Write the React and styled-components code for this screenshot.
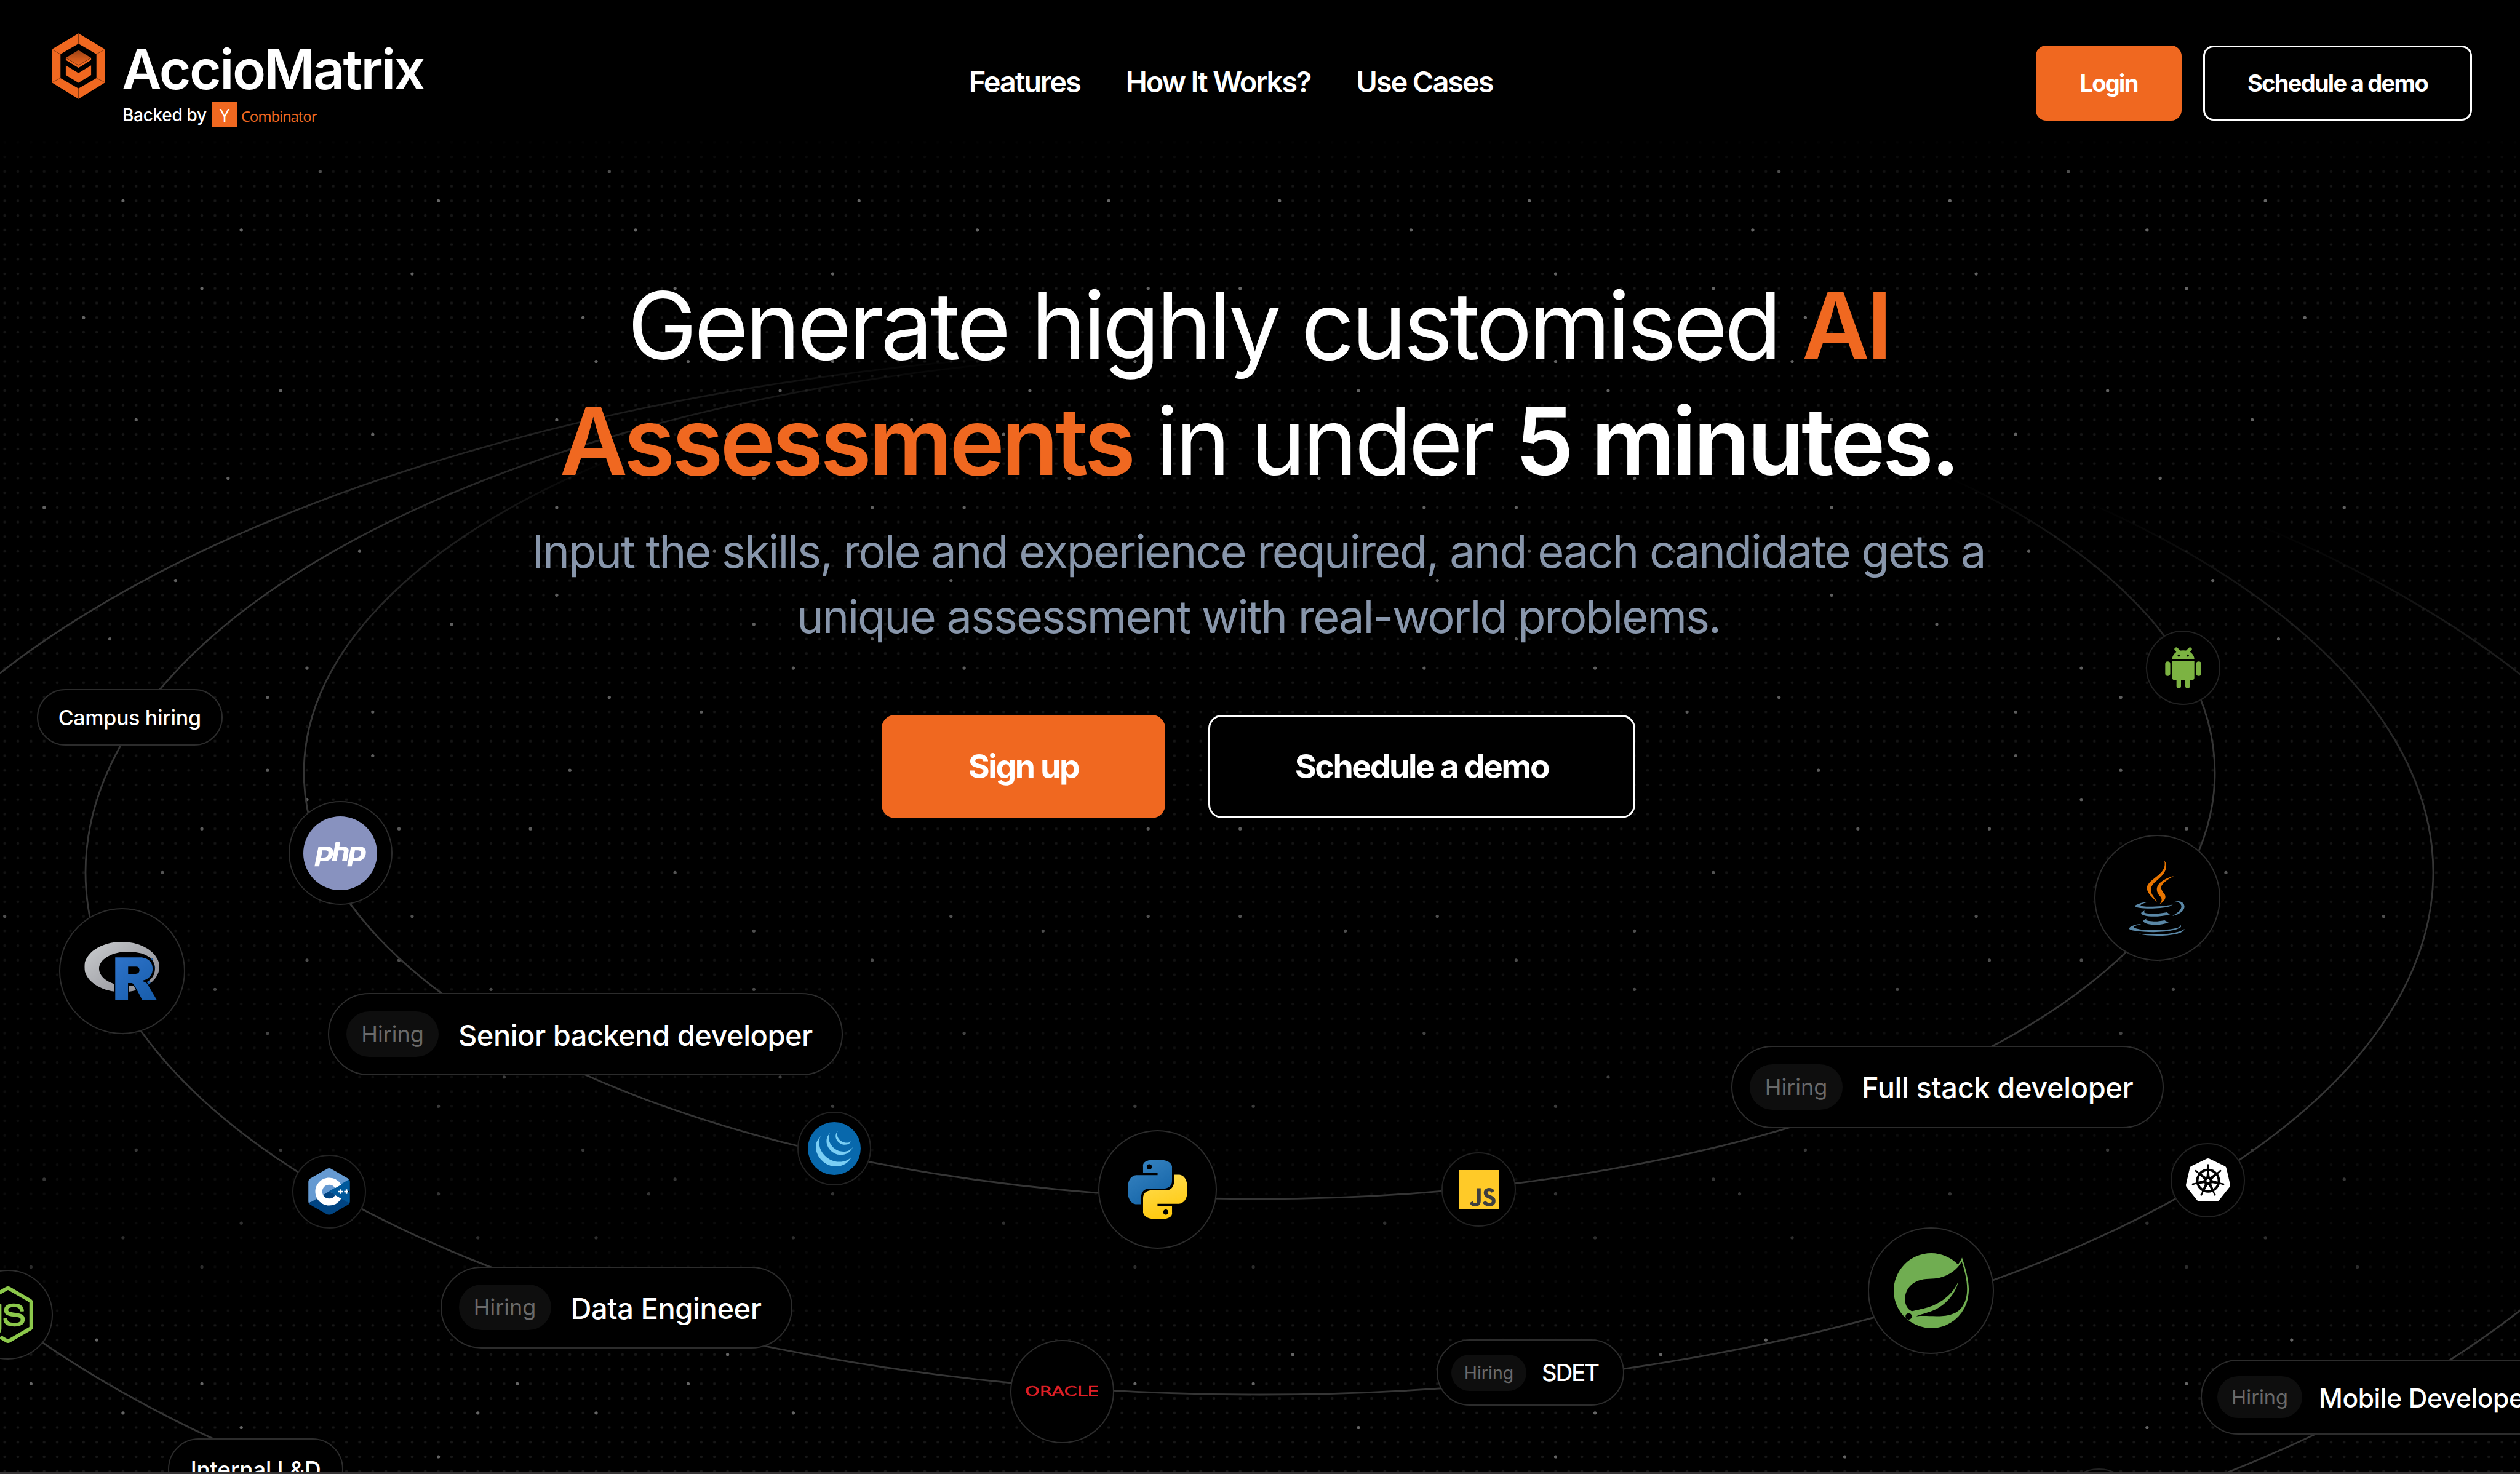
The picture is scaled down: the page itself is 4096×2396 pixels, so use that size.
import React from "react";
import styled, { createGlobalStyle, css } from "styled-components";
import {
  SiSpring,
  SiKubernetes,
  SiJquery,
  SiJavascript,
  SiCplusplus,
  SiNodedotjs,
  SiR,
} from "react-icons/si";
import { DiPhp } from "react-icons/di";

const ORANGE = "#f06820";
const LINE = "#2c2c2c";

const GlobalStyle = createGlobalStyle`
  * { box-sizing: border-box; }
  body { margin: 0; background: #000; }
`;

const Page = styled.div`
  position: relative;
  width: 4096px;
  height: 2396px;
  overflow: hidden;
  background: #000;
  color: #fff;
  font-family: Inter, "Liberation Sans", sans-serif;
`;

const Backdrop = styled.svg`
  position: absolute;
  inset: 0;
  width: 100%;
  height: 100%;
`;

/* ---------- header ---------- */

const Header = styled.header`
  position: relative;
  display: flex;
  align-items: center;
  justify-content: space-between;
  height: 269px;
  padding: 0 78px 0 84px;
`;

const Logo = styled.a`
  display: flex;
  align-self: flex-start;
  gap: 27px;
  width: 608px;
  padding-top: 54px;
`;

const LogoMark = styled.svg`
  flex: none;
  width: 87px;
  height: 107px;
`;

const LogoText = styled.div`
  padding-top: 14px;
`;

const Wordmark = styled.div`
  font-size: 89px;
  line-height: 90px;
  font-weight: 600;
  letter-spacing: -2.6px;
`;

const BackedRow = styled.div`
  display: flex;
  align-items: center;
  height: 41px;
  margin-top: 8px;
  padding-left: 1px;
  white-space: nowrap;
  font-size: 28px;
  font-weight: 500;
  letter-spacing: -0.3px;
`;

const YBox = styled.span`
  display: grid;
  place-items: center;
  width: 40px;
  height: 41px;
  margin: 0 7px 0 9px;
  background: ${ORANGE};
  font: 400 29px/41px "Open Sans", "Noto Sans", sans-serif;
`;

const Combinator = styled.span`
  padding-top: 4px;
  color: ${ORANGE};
  font: 400 24px/36px "Noto Sans", "Open Sans", sans-serif;
  letter-spacing: -1.2px;
`;

const Nav = styled.nav`
  display: flex;
  gap: 74px;
  margin-top: -4px;
  font-size: 47px;
  line-height: 60px;
  font-weight: 600;
  letter-spacing: -0.045em;
`;

const NavLink = styled.a`
  color: #fff;
`;

const Actions = styled.div`
  display: flex;
  gap: 35px;
`;

const Button = styled.button`
  width: ${(p) => p.$width}px;
  height: 122px;
  padding: 0;
  border: 3px solid ${(p) => (p.$primary ? ORANGE : "#fff")};
  border-radius: 17px;
  background: ${(p) => (p.$primary ? ORANGE : "#000")};
  color: #fff;
  font: 700 38px/1 Inter, "Liberation Sans", sans-serif;
  letter-spacing: -0.045em;
  ${(p) =>
    p.$large &&
    css`
      height: 168px;
      border-radius: 22px;
      font-size: 53.5px;
    `}
`;

/* ---------- hero ---------- */

const Hero = styled.main`
  position: relative;
  display: flex;
  flex-direction: column;
  align-items: center;
  padding: 166px 5px 0 0;
  text-align: center;
`;

const Title = styled.h1`
  margin: 0;
  font-size: 151.6px;
  line-height: 188px;
  font-weight: 400;
  letter-spacing: -0.033em;
`;

const Strong = styled.b`
  font-weight: 600;
  color: ${(p) => (p.$accent ? ORANGE : "inherit")};
`;

const Subtitle = styled.p`
  margin: 33px 0 106.500px;
  color: #8896ab;
  font-size: 74px;
  line-height: 105.6px;
  font-weight: 400;
  letter-spacing: -0.0285em;
`;

const HeroActions = styled.div`
  display: flex;
  gap: 70px;
`;

/* ---------- orbit diagram ---------- */

const Canvas = styled.div`
  position: absolute;
  inset: 0;
`;

const Node = styled.div`
  position: absolute;
  left: ${(p) => p.$x - p.$r}px;
  top: ${(p) => p.$y - p.$r}px;
  width: ${(p) => p.$r * 2}px;
  height: ${(p) => p.$r * 2}px;
  display: grid;
  place-items: center;
  border: 2px solid ${(p) => (p.$r < 70 ? "#222" : LINE)};
  border-radius: 50%;
  background: #000;
`;

const Pill = styled.div`
  position: absolute;
  left: ${(p) => p.$x}px;
  top: ${(p) => p.$y}px;
  display: flex;
  align-items: center;
  height: ${(p) => p.$h}px;
  width: ${(p) => p.$w}px;
  border: 2px solid ${LINE};
  border-radius: ${(p) => p.$h / 2}px;
  background: #000;
  white-space: nowrap;
`;

const Badge = styled.span`
  flex: none;
  display: grid;
  place-items: center;
  width: ${(p) => p.$w}px;
  height: ${(p) => p.$h}px;
  margin-left: ${(p) => p.$inset}px;
  border-radius: ${(p) => p.$h / 2}px;
  background: #0e0e0e;
  color: #6a6a6a;
  font-size: ${(p) => p.$size}px;
`;

const PillTitle = styled.span`
  margin-left: ${(p) => p.$gap}px;
  padding-top: ${(p) => p.$drop || 0}px;
  font-size: ${(p) => p.$size}px;
  font-weight: 500;
  letter-spacing: ${(p) => p.$spacing}px;
`;

const CenterLabel = styled.span`
  margin: 0 auto;
  font-size: ${(p) => p.$size}px;
  font-weight: 500;
  letter-spacing: -0.3px;
`;

const BottomBar = styled.div`
  position: absolute;
  left: 0;
  right: 0;
  bottom: 0;
  height: 3px;
  background: #373536;
`;

/* ---------- logos in the nodes ---------- */

const Disc = styled.div`
  display: grid;
  place-items: center;
  width: ${(p) => p.$size}px;
  height: ${(p) => p.$size}px;
  border-radius: 50%;
  background: ${(p) => p.$color};
`;

const Tile = styled.div`
  display: grid;
  place-items: center;
  width: 63px;
  height: 64px;
  background: #3f3f3f;
`;

const Stack = styled.div`
  display: grid;
  > * {
    grid-area: 1 / 1;
  }
`;

const Layer = styled.div`
  display: grid;
  color: ${(p) => p.$color};
  background: ${(p) => p.$back || "none"};
  clip-path: ${(p) => p.$clip};
  svg {
    fill: ${(p) => p.$fill || "currentColor"};
  }
`;

const OracleText = styled.span`
  color: #e01f26;
  font: 400 21.2px/1 "DejaVu Sans", sans-serif;
  -webkit-text-stroke: 0.6px #e01f26;
  transform: scaleX(1.42);
`;

const Art = styled.svg`
  width: ${(p) => p.$w}px;
  height: ${(p) => p.$h}px;
`;

const CppLogo = () => (
  <Stack>
    <Layer
      $back="#fff"
      $clip="polygon(50% 4%, 90% 28%, 90% 72%, 50% 96%, 10% 72%, 10% 28%)"
    />
    <Layer $color="#659ad2" $clip="polygon(0 0, 100% 0, 100% 21%, 50% 50%, 0 79%)">
      <SiCplusplus size={76} />
    </Layer>
    <Layer $color="#00599c" $clip="polygon(100% 20%, 100% 80%, 49.5% 50%)">
      <SiCplusplus size={76} />
    </Layer>
    <Layer $color="#004482" $clip="polygon(0 79%, 50% 50%, 100% 79%, 100% 100%, 0 100%)">
      <SiCplusplus size={76} />
    </Layer>
  </Stack>
);

const letterClip =
  "40.5% 31%, 80% 31%, 90% 33%, 94% 45%, 92% 55%, 86% 62.5%, 88% 66%, 98% 91%, 76% 91%, 66% 71%, 58.5% 66%, 58.5% 91%, 40.5% 91%";

const RLogo = () => (
  <Stack>
    <svg width="0" height="0">
      <defs>
        <linearGradient id="ringGrey" x1="0" y1="0" x2="1" y2="1">
          <stop offset="0" stopColor="#cbced0" />
          <stop offset="1" stopColor="#84838b" />
        </linearGradient>
        <linearGradient id="letterBlue" x1="0" y1="0" x2="1" y2="1">
          <stop offset="0.3" stopColor="#2f74cb" />
          <stop offset="1" stopColor="#165caa" />
        </linearGradient>
      </defs>
    </svg>
    <Layer
      $fill="url(#ringGrey)"
      $clip={`polygon(evenodd, 0 0, 100% 0, 100% 100%, 0 100%, 0 0, ${letterClip}, 40.5% 31%, 0 0)`}
    >
      <SiR size={122} />
    </Layer>
    <Layer $fill="url(#letterBlue)" $clip={`polygon(${letterClip})`}>
      <SiR size={122} />
    </Layer>
  </Stack>
);

const PythonLogo = () => (
  <Art $w={97} $h={97} viewBox="0 0 24 24">
    <defs>
      <linearGradient id="pyBlue" x1="0" y1="0" x2="0.6" y2="1">
        <stop offset="0" stopColor="#3b87c4" />
        <stop offset="1" stopColor="#1565a8" />
      </linearGradient>
      <linearGradient id="pyYellow" x1="0.3" y1="0" x2="0.6" y2="1">
        <stop offset="0" stopColor="#ffdc50" />
        <stop offset="1" stopColor="#ffc80a" />
      </linearGradient>
    </defs>
    <path
      fill="url(#pyBlue)"
      d="M14.25.18l.9.2.73.26.59.3.45.32.34.34.25.34.16.33.1.3.04.26.02.2-.01.13V8.5l-.05.63-.13.55-.21.46-.26.38-.3.31-.33.25-.35.19-.35.14-.33.1-.3.07-.26.04-.21.02H8.77l-.69.05-.59.14-.5.22-.41.27-.33.32-.27.35-.2.36-.15.37-.1.35-.07.32-.04.27-.02.21v3.06H3.17l-.21-.03-.28-.07-.32-.12-.35-.18-.36-.26-.36-.36-.35-.46-.32-.59-.28-.73-.21-.88-.14-1.05-.05-1.23.06-1.22.16-1.04.24-.87.32-.71.36-.57.4-.44.42-.33.42-.24.4-.16.36-.1.32-.05.24-.01h.16l.06.01h8.16v-.83H6.18l-.01-2.75-.02-.37.05-.34.11-.31.17-.28.25-.26.31-.23.38-.2.44-.18.51-.15.58-.12.64-.1.71-.06.77-.04.84-.02 1.27.05zm-6.3 1.98l-.23.33-.08.41.08.41.23.34.33.22.41.09.41-.09.33-.22.23-.34.08-.41-.08-.41-.23-.33-.33-.22-.41-.09-.41.09z"
    />
    <path
      fill="url(#pyYellow)"
      d="M21.04 6.11l.28.06.32.12.35.18.36.27.36.35.35.47.32.59.28.73.21.88.14 1.04.05 1.23-.06 1.23-.16 1.04-.24.86-.32.71-.36.57-.4.45-.42.33-.42.24-.4.16-.36.09-.32.05-.24.02-.16-.01h-8.22v.82h5.84l.01 2.76.02.36-.05.34-.11.31-.17.29-.25.25-.31.24-.38.2-.44.17-.51.15-.58.13-.64.09-.71.07-.77.04-.84.01-1.27-.04-1.07-.14-.9-.2-.73-.25-.59-.3-.45-.33-.34-.34-.25-.34-.16-.33-.1-.3-.04-.25-.02-.2.01-.13v-5.34l.05-.64.13-.54.21-.46.26-.38.3-.32.33-.24.35-.2.35-.14.33-.1.3-.06.26-.04.21-.02.13-.01h5.84l.69-.05.59-.14.5-.21.41-.28.33-.32.27-.35.2-.36.15-.36.1-.35.07-.32.04-.28.02-.21V6.07h2.09l.14.01zm-6.47 14.25l-.23.33-.08.41.08.41.23.33.33.23.41.08.41-.08.33-.23.23-.33.08-.41-.08-.41-.23-.33-.33-.23-.41-.08-.41.08z"
    />
  </Art>
);

const JavaLogo = () => (
  <Art $w={92} $h={122} viewBox="5 0 376 512">
    <g fill="#e87500">
      <path d="M192.34 280.8c-19-42.7-83.1-80.2 0-145.8C296 53.2 242.84 0 242.84 0c21.5 84.5-75.6 110.1-110.7 162.6-23.9 35.9 11.7 74.4 60.2 118.2z" />
      <path d="M306.94 104.6c.1 0-175.2 43.8-91.5 140.2 24.7 28.4-6.5 54-6.5 54s62.7-32.4 33.9-72.9c-26.9-37.8-47.5-56.6 64.1-121.3z" />
    </g>
    <path
      fill="#5a87a6"
      d="M277.74 312.9c9.8-6.7 23.4-12.5 23.4-12.5s-38.7 7-77.2 10.2c-47.1 3.9-97.7 4.7-123.1 1.3-60.1-8 33-30.1 33-30.1s-36.1-2.4-80.6 19c-52.5 25.4 130 37 224.5 12.1zM300.84 375.1a12.19 12.19 0 0 1-2 2.6c128.3-33.7 81.1-118.9 19.8-97.3a17.33 17.33 0 0 0-8.2 6.3 70.45 70.45 0 0 1 11-3c31-6.5 75.5 41.5-20.6 91.4zM348 437.4s14.5 11.9-15.9 21.2c-57.9 17.5-240.8 22.8-291.6.7-18.3-7.9 16-19 26.8-21.3 11.2-2.4 17.7-2 17.7-2-20.3-14.3-131.3 28.1-56.4 40.2C232.84 509.4 401 461.3 348 437.4zM124.44 396c-78.7 22 47.9 67.4 148.1 24.5a185.89 185.89 0 0 1-28.2-13.8c-44.7 8.5-65.4 9.1-106 4.5-33.5-3.8-13.9-15.2-13.9-15.2zm179.8 97.2c-78.7 14.8-175.8 13.1-233.3 3.6 0-.1 11.8 9.7 72.4 13.6 92.2 5.9 233.8-3.3 237.1-46.9 0 0-6.4 16.5-76.2 29.7zM260.64 353c-59.2 11.4-93.5 11.1-136.8 6.6-33.5-3.5-11.6-19.7-11.6-19.7-86.8 28.8 48.2 61.4 169.5 25.9a60.37 60.37 0 0 1-21.1-12.8z"
    />
  </Art>
);

const AndroidLogo = () => (
  <Art $w={59} $h={67} viewBox="0 0 88.5 100.5" fill="#7cb342">
    <path d="M27.500 5 35 13M61 5 53.500 13" stroke="#7cb342" strokeWidth="9" strokeLinecap="round" />
    <path d="M17.500 29.500C17.500 20 24 13 33 9Q44.500 6.500 56 9C65 13 71.500 20 71.500 29.500Z" />
    <path d="M17.500 34.500h54v40a5 5 0 0 1-5 5H60.500V95a5.500 5.500 0 0 1-11 0V79.500H39V95a5.500 5.500 0 0 1-11 0V79.500H22.500a5 5 0 0 1-5-5Z" />
    <rect x="0.5" y="35" width="12.300" height="35" rx="6" />
    <rect x="76" y="35" width="12.300" height="35" rx="6" />
    <circle cx="33.500" cy="20.500" r="2.700" fill="#000" />
    <circle cx="55.600" cy="20.500" r="2.700" fill="#000" />
  </Art>
);

const BrandMark = () => (
  <LogoMark viewBox="0 0 131 160">
    <defs>
      <linearGradient id="gem" x1="0" y1="0" x2="0" y2="1">
        <stop offset="0" stopColor="#9c4215" />
        <stop offset="1" stopColor={ORANGE} />
      </linearGradient>
    </defs>
    <path
      fill={ORANGE}
      fillRule="evenodd"
      d="M65.500 0 131 39V120L65.500 160 0 120V39ZM65.500 25 21.500 50.700V109.300L65.500 134.500 109.500 109.300V50.700Z"
    />
    <path
      stroke="#5a2508"
      strokeWidth="1"
      d="M65.500 0V25M131 39 109.500 50.700M131 120 109.500 109.300M65.500 160V134.500M0 120 21.500 109.300M0 39 21.500 50.700"
    />
    <path fill={ORANGE} d="M34.500 60 65.500 77.500 96.500 60V65L65.500 84 34.500 65Z" />
    <path fill="url(#gem)" d="M65.500 40.700 96.500 59.700 65.500 77.500 34.500 59.700Z" />
    <path fill="none" stroke="#7c3510" strokeWidth="1" d="M34.500 60 65.500 78 96.500 60" />
    <path fill={ORANGE} d="M34.500 78.300 65.500 97 96.500 78.300V102L65.500 120.700 34.500 102Z" />
  </LogoMark>
);

/* ---------- backdrop: dot grid, stars and orbits ---------- */

const COL = 21.363;
const ROW = 23.74;
const X0 = 434.9 - 20 * COL;
const Y0 = 468.8 - 8 * ROW;
const UNIT = 0.66494;
const CENTER = 2919;

/* star positions by row, for the left half; the right half is its mirror */
const starRows = [
  [420, 780, 1480], [490, 300, 1070], [556, 600, 1550], [490, 2110, 2700], [560, 2400],
  [669, 2031, 1000], [705, 1648, 2803, 480], [777, 1422, 2416, 200], [885, 1454, 1679, 2031, 2771],
  [957, 1902, 2513, 690], [1026, 1358, 2224, 330], [1063, 1776, 2450, 910], [1100, 2936],
  [1171, 1840, 2610, 560], [1243, 1358, 2127, 2352, 110], [1348, 1744, 2095, 2706, 880],
  [1420, 2320, 430], [1456, 1358], [1529, 1840, 1100], [1565, 2127, 270],
  [1634, 1934, 2352, 750], [1706, 654, 1480], [1742, 910, 1712], [1847, 910, 2610],
  [1883, 654, 1390], [1955, 750], [2023, 495, 976, 1300, 2800], [2132, 399, 1640],
  [2240, 13, 1007, 2340, 2800], [2280, 1840, 2540], [2349, 750, 976, 2130], [2421, 527, 1200, 1841],
  [2526, 654, 2352], [2631, 1230, 1903], [2706, 1072, 2032, 2770], [2812, 335, 686, 1423],
  [2884, 110, 1648], [2920, 1072, 2032, 1600], [2992, 590, 2450], [3030, 301, 1168, 1454, 1934],
  [3097, 77, 495, 2770],
];
const lowerStarRows = [
  [3286, 238, 4317, 5600], [3322, 1777, 3163, 4061], [3394, 77, 495, 1263, 1680, 2772, 3066, 5342],
  [3465, 301, 1168, 1454, 1934, 3903], [3500, 589, 2514, 3324, 5248], [3572, 1072, 3806, 4500],
];

const snapX = (x) => X0 + Math.round((x * UNIT - X0) / COL) * COL;
const snapY = (y) => Y0 + Math.round((y * UNIT - Y0) / ROW) * ROW;

const stars = [
  ...starRows.flatMap(([y, ...xs]) =>
    xs.flatMap((x) => [
      [snapX(x), snapY(y)],
      [snapX(2 * CENTER - x), snapY(y)],
    ])
  ),
  ...lowerStarRows.flatMap(([y, ...xs]) => xs.map((x) => [snapX(x), snapY(y)])),
];

const orbits = [
  { id: "inner", cy: 1256, rx: 1553, ry: 693, from: [1000, 740], to: [993, 1140] },
  { id: "middle", cy: 1418, rx: 1908, ry: 849, from: [1700, 590], to: [1638, 1060] },
  { id: "outer", cy: 1613, rx: 2355, ry: 1049, from: [1700, 590], to: [1638, 1060] },
];

const Scene = () => (
  <Backdrop viewBox="0 0 4096 2396">
    <defs>
      <pattern id="dots" x={X0 - COL / 2} y={Y0 - ROW / 2} width={COL} height={ROW} patternUnits="userSpaceOnUse">
        <circle cx={COL / 2} cy={ROW / 2} r="2.300" fill="#fff" />
      </pattern>
      <linearGradient id="fade" gradientUnits="userSpaceOnUse" x1="0" y1="220" x2="0" y2="2396">
        <stop offset="0" stopColor="#fff" stopOpacity="0" />
        <stop offset="0.035" stopColor="#fff" stopOpacity="1" />
        <stop offset="0.5" stopColor="#fff" stopOpacity="0.9" />
        <stop offset="0.870" stopColor="#fff" stopOpacity="0.4" />
        <stop offset="0.885" stopColor="#fff" stopOpacity="1" />
        <stop offset="1" stopColor="#fff" stopOpacity="1" />
      </linearGradient>
      <mask id="veil" maskUnits="userSpaceOnUse" x="0" y="0" width="4096" height="2396">
        <rect width="4096" height="2396" fill="url(#fade)" />
      </mask>
      {orbits.map((o) => (
        <linearGradient
          key={o.id}
          id={o.id}
          gradientUnits="userSpaceOnUse"
          x1={o.from[0]}
          y1={o.from[1]}
          x2={o.to[0]}
          y2={o.to[1]}
        >
          <stop offset="0" stopColor="#353535" stopOpacity="0" />
          <stop offset="0.25" stopColor="#353535" stopOpacity="0.45" />
          <stop offset="1" stopColor="#353535" stopOpacity="1" />
        </linearGradient>
      ))}
    </defs>
    <g mask="url(#veil)">
      <rect y="220" width="4096" height="2176" fill="url(#dots)" opacity="0.09" />
      {stars.map(([x, y], i) => (
        <circle key={i} cx={x} cy={y} r="2.600" fill="#666" />
      ))}
    </g>
    {orbits.map((o) => (
      <ellipse
        key={o.id}
        cx="2047"
        cy={o.cy}
        rx={o.rx}
        ry={o.ry}
        fill="none"
        stroke={`url(#${o.id})`}
        strokeWidth="2.800"
      />
    ))}
  </Backdrop>
);

const logoNodes = [
  { x: 553.4, y: 1386.7, r: 84.3, art: <Disc $size={120} $color="#8892bf"><DiPhp size={118} /></Disc> },
  { x: 198.5, y: 1578.2, r: 102.7, art: <RLogo /> },
  { x: 535, y: 1936.6, r: 60, art: <CppLogo /> },
  { x: 1355.7, y: 1867, r: 60, art: <Disc $size={86} $color="#0868ac"><SiJquery size={60} color="#7acef4" /></Disc> },
  { x: 1881, y: 1933.5, r: 96.5, art: <PythonLogo /> },
  { x: 2403.6, y: 1933.6, r: 60.5, art: <Tile><SiJavascript size={64} color="#ffca28" /></Tile> },
  { x: 3548.8, y: 1085.6, r: 60.5, art: <AndroidLogo /> },
  { x: 3506.3, y: 1459.6, r: 102.7, art: <JavaLogo /> },
  { x: 3588.7, y: 1918, r: 60.5, art: <SiKubernetes size={72} color="#fff" /> },
  { x: 3138.6, y: 2098, r: 102.7, art: <SiSpring size={122} color="#70ad51" /> },
  { x: 1726.7, y: 2262, r: 84.3, art: <OracleText>ORACLE</OracleText> },
  { x: 13, y: 2137.3, r: 73, art: <SiNodedotjs size={92} color="#8cc84b" /> },
  { x: 3411, y: 2447, r: 60.5, art: null },
];

const hiringPills = [
  { text: "Senior backend developer", x: 533, y: 1614, w: 837, h: 134, bw: 150, bh: 74, bs: 36, inset: 28, gap: 32, size: 47, spacing: -0.5, drop: 2 },
  { text: "Full stack developer", x: 2814, y: 1699.5, w: 703, h: 134, bw: 151, bh: 74, bs: 36, inset: 28, gap: 31, size: 47, spacing: -0.4, drop: 2 },
  { text: "Data Engineer", x: 715.5, y: 2058.5, w: 572, h: 133, bw: 150, bh: 74, bs: 36, inset: 28, gap: 32, size: 47, spacing: -0.4, drop: 2 },
  { text: "SDET", x: 2335, y: 2177, w: 304.5, h: 108, bw: 122, bh: 59, bs: 28.5, inset: 22, gap: 25, size: 38, spacing: -1.9, drop: 0 },
  { text: "Mobile Developer", x: 3577, y: 2210, w: 640, h: 122, bw: 138, bh: 68, bs: 32.5, inset: 25, gap: 27, size: 42.5, spacing: -0.4, drop: 2 },
];

export default function App() {
  return (
    <Page>
      <GlobalStyle />
      <Scene />
      <Canvas>
        {logoNodes.map((n, i) => (
          <Node key={i} $x={n.x} $y={n.y} $r={n.r}>
            {n.art}
          </Node>
        ))}
        {hiringPills.map((p) => (
          <Pill key={p.text} $x={p.x} $y={p.y} $w={p.w} $h={p.h}>
            <Badge $w={p.bw} $h={p.bh} $size={p.bs} $inset={p.inset}>
              Hiring
            </Badge>
            <PillTitle $gap={p.gap} $size={p.size} $spacing={p.spacing} $drop={p.drop}>
              {p.text}
            </PillTitle>
          </Pill>
        ))}
        <Pill $x={59.7} $y={1120} $w={302} $h={92}>
          <CenterLabel $size={34}>Campus hiring</CenterLabel>
        </Pill>
        <Pill $x={273} $y={2338} $w={285} $h={100}>
          <CenterLabel $size={37}>Internal L&amp;D</CenterLabel>
        </Pill>
      </Canvas>

      <Header>
        <Logo>
          <BrandMark />
          <LogoText>
            <Wordmark>AccioMatrix</Wordmark>
            <BackedRow>
              Backed by
              <YBox>Y</YBox>
              <Combinator>Combinator</Combinator>
            </BackedRow>
          </LogoText>
        </Logo>
        <Nav>
          <NavLink>Features</NavLink>
          <NavLink>How It Works?</NavLink>
          <NavLink>Use Cases</NavLink>
        </Nav>
        <Actions>
          <Button $primary $width={237}>Login</Button>
          <Button $width={437}>Schedule a demo</Button>
        </Actions>
      </Header>

      <Hero>
        <Title>
          Generate highly customised <Strong $accent>AI</Strong>
          <br />
          <Strong $accent>Assessments</Strong> in under <Strong>5 minutes.</Strong>
        </Title>
        <Subtitle>
          Input the skills, role and experience required, and each candidate gets a
          <br />
          unique assessment with real-world problems.
        </Subtitle>
        <HeroActions>
          <Button $primary $large $width={461}>Sign up</Button>
          <Button $large $width={694}>Schedule a demo</Button>
        </HeroActions>
      </Hero>
      <BottomBar />
    </Page>
  );
}
